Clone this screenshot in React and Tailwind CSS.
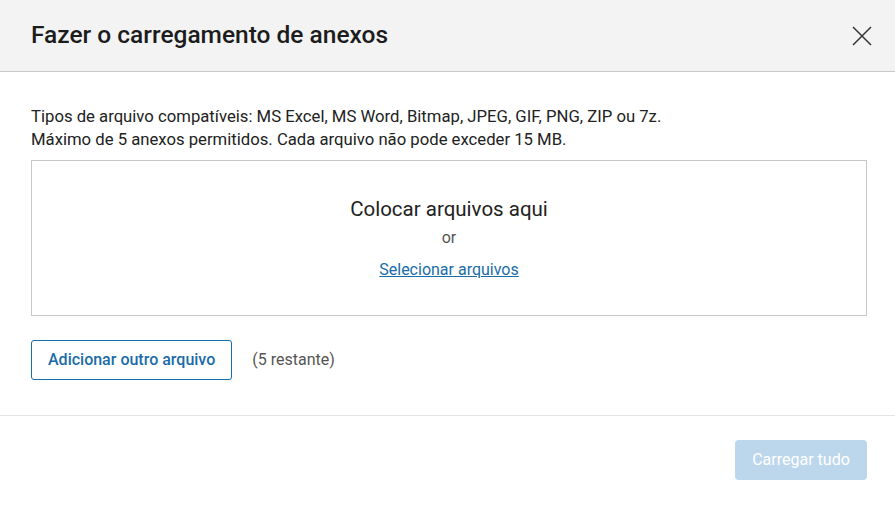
import React from 'react';

export default function App() {
  return (
    <div className="w-[895px] h-[505px] bg-white text-[#222] overflow-hidden" style={{ fontFamily: 'Roboto, "Noto Sans", sans-serif' }}>
      <div className="h-[72px] bg-[#f3f3f3] border-b border-[#c9c9c9] flex items-center justify-between pl-[31px] pr-[22px]">
        <h1 className="text-[24.5px] font-medium text-[#1c1c1c]">Fazer o carregamento de anexos</h1>
        <button className="w-[22px] h-[22px] flex items-center justify-center text-[#333]">
          <svg width="20" height="20" viewBox="0 0 20 20" fill="none" stroke="currentColor" strokeWidth="1.5">
            <path d="M1 1 L19 19 M19 1 L1 19" />
          </svg>
        </button>
      </div>

      <div className="pl-[31px] pr-[28px] pt-[33px] pb-[35px] border-b border-[#e3e3e3]">
        <p className="text-[16.7px] leading-[23px] text-[#222]">
          Tipos de arquivo compatíveis: MS Excel, MS Word, Bitmap, JPEG, GIF, PNG, ZIP ou 7z.
          <br />
          Máximo de 5 anexos permitidos. Cada arquivo não pode exceder 15 MB.
        </p>

        <div className="mt-[9px] h-[156px] border border-[#c8c8c8] flex flex-col items-center pt-[35px]">
          <div className="text-[20.5px] leading-[26px] text-[#222]">Colocar arquivos aqui</div>
          <div className="text-[16px] leading-[20px] text-[#555] mt-[6px]">or</div>
          <a href="#" className="text-[16px] leading-[20px] text-[#1a6ca8] underline mt-[12px]">Selecionar arquivos</a>
        </div>

        <div className="mt-[24px] flex items-center gap-[20px]">
          <button className="h-[40px] px-[16px] border border-[#1a6ca8] rounded-[3px] text-[16px] font-medium text-[#1a6ca8]">
            Adicionar outro arquivo
          </button>
          <span className="text-[16px] text-[#555]">(5 restante)</span>
        </div>
      </div>

      <div className="flex justify-end px-[28px] pt-[24px]">
        <button className="h-[40px] w-[132px] rounded-[4px] bg-[#bcd7ec] text-white text-[16px]">
          Carregar tudo
        </button>
      </div>
    </div>
  );
}
